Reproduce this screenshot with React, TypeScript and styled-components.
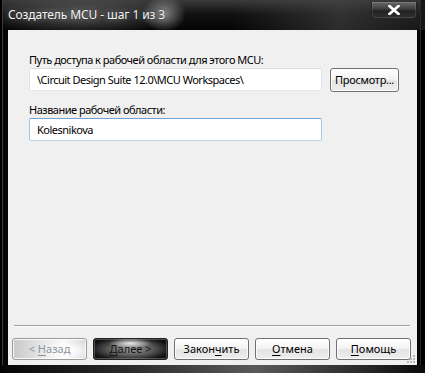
import React from "react";
import styled, { createGlobalStyle, css } from "styled-components";

const GlobalStyle = createGlobalStyle`
  html, body { margin: 0; padding: 0; background: #000; }
  body { font-family: "Noto Sans", "Open Sans", sans-serif; }
`;

const Window = styled.div`
  width: 425px;
  height: 373px;
  display: flex;
  flex-direction: column;
  background:
    radial-gradient(ellipse 95px 22px at 80px 15px, rgba(120,120,120,0.6), rgba(0,0,0,0) 100%),
    radial-gradient(ellipse 22px 18px at 164px 14px, rgba(220,220,220,0.55), rgba(0,0,0,0) 100%),
    linear-gradient(180deg, #3a3a3a 0px, #111 14px, #050505 30px),
    #000;
  box-shadow: inset 2px 0 0 #000, inset 3px 0 0 #3a3a3a, inset -4px 0 0 #000, inset -5px 0 0 #2a2a2a;
  position: relative;
  overflow: hidden;
`;

const TitleBar = styled.div`
  height: 30px;
  display: flex;
  align-items: flex-start;
  padding-left: 8px;
  background: linear-gradient(90deg, rgba(0,0,0,0) 55%, rgba(70,70,70,0.6) 80%, rgba(40,40,40,0.5) 100%);
`;

const Title = styled.div`
  margin-top: 6px;
  color: #f4f4f4;
  font-size: 12px;
  line-height: 18px;
  letter-spacing: -0.1px;
  text-shadow: 0 0 6px rgba(255,255,255,0.45), 0 0 2px rgba(0,0,0,0.8);
`;

const CloseButton = styled.div`
  margin-left: auto;
  margin-right: 8px;
  margin-top: 2px;
  width: 44px;
  height: 16px;
  border: 1px solid #222;
  border-top: none;
  border-radius: 0 0 4px 4px;
  background: linear-gradient(180deg, #6a6a6a 0%, #3c3c3c 45%, #222 55%, #2e2e2e 100%);
  box-shadow: inset 0 0 0 1px rgba(255,255,255,0.12);
  display: flex;
  align-items: center;
  justify-content: center;
`;

const Client = styled.div`
  margin: 0 8px;
  height: 335px;
  background: #f0f0f0;
  display: flex;
  flex-direction: column;
  position: relative;
  color: #000;
  font-size: 11px;
  letter-spacing: -0.5px;
`;

const Content = styled.div`
  padding: 22px 0 0 21px;
  display: flex;
  flex-direction: column;
`;

const Label = styled.div<{ $gap?: number }>`
  height: 16px;
  line-height: 16px;
  margin-top: ${(p) => p.$gap ?? 0}px;
`;

const Row = styled.div`
  display: flex;
  gap: 8px;
  align-items: flex-start;
`;

const TextBox = styled.input<{ $focused?: boolean }>`
  box-sizing: border-box;
  width: 293px;
  height: 23px;
  margin: 0;
  padding: 0 4px 0 7px;
  font: inherit;
  letter-spacing: -0.5px;
  color: #000;
  background: #fff;
  outline: none;
  border: 1px solid;
  border-radius: 2px;
  ${(p) =>
    p.$focused
      ? css`border-color: #6fa3d6 #a4c9e3 #b7d5ee #a4c9e3;`
      : css`border-color: #dcdde2 #e2e3ea #e3e9ef #e2e3ea;`}
`;

const Button = styled.div<{ $variant?: "normal" | "disabled" | "dark"; $w?: number; $h?: number; $ls?: number }>`
  box-sizing: border-box;
  width: ${(p) => p.$w ?? 75}px;
  height: ${(p) => p.$h ?? 22}px;
  border: 1px solid #707070;
  border-radius: 3px;
  display: flex;
  align-items: center;
  justify-content: center;
  line-height: 16px;
  letter-spacing: ${(p) => p.$ls ?? 0}px;
  color: #000;
  white-space: pre;
  box-shadow: inset 0 0 0 1px rgba(255,255,255,0.85);
  background: linear-gradient(180deg, #ffffff 0%, #f4f4f4 45%, #e4e4e4 55%, #eeeeee 100%);
  ${(p) =>
    p.$variant === "disabled" &&
    css`
      color: #8b95a3;
      border-color: #9a9a9a;
      background:
        radial-gradient(ellipse 30px 10px at 55px 12px, #ffffff, rgba(255,255,255,0) 100%),
        linear-gradient(90deg, #c9c9c9 0%, #e6e6e6 40%, #fafafa 70%, #d8d8d8 100%);
    `}
  ${(p) =>
    p.$variant === "dark" &&
    css`
      color: #151515;
      border-color: #222;
      box-shadow: inset 0 0 0 1px rgba(255,255,255,0.25);
      background:
        radial-gradient(ellipse 22px 5px at 50% 22%, rgba(255,255,255,0.85), rgba(255,255,255,0) 100%),
        radial-gradient(ellipse 40px 12px at 50% 50%, #9a9a9a 0%, #5a5a5a 55%, #111 100%),
        #000;
    `}
`;

const U = styled.span`
  text-decoration: underline;
  text-underline-offset: 2px;
`;

const Spacer = styled.div`
  flex: 1;
`;

const Separator = styled.div`
  margin: 0 7px 0 6px;
  height: 1px;
  background: #a0a0a0;
  border-bottom: 1px solid #fff;
`;

const ButtonRow = styled.div`
  display: flex;
  gap: 6px;
  padding: 11px 0 5px 4px;
`;

const Grip = styled.svg`
  position: absolute;
  right: 1px;
  bottom: 1px;
`;

const BottomFrame = styled.div`
  height: 8px;
  background: linear-gradient(90deg, #050505 0%, #2a2a2a 30%, #5a5a5a 60%, #2a2a2a 85%, #0a0a0a 100%);
`;

export default function App() {
  return (
    <>
      <GlobalStyle />
      <Window>
        <TitleBar>
          <Title>Создатель MCU - шаг 1 из 3</Title>
          <CloseButton>
            <svg width="12" height="10" viewBox="0 0 12 10">
              <path d="M1.5 1 L10.5 9 M10.5 1 L1.5 9" stroke="#fff" strokeWidth="2.6" strokeLinecap="square" />
            </svg>
          </CloseButton>
        </TitleBar>
        <Client>
          <Content>
            <Label>Путь доступа к рабочей области для этого MCU:</Label>
            <Row>
              <TextBox readOnly defaultValue="\Circuit Design Suite 12.0\MCU Workspaces\" />
              <Button $w={69} $h={24} $ls={-0.3}>Просмотр...</Button>
            </Row>
            <Label $gap={10}>Название рабочей области:</Label>
            <Row>
              <TextBox $focused readOnly defaultValue="Kolesnikova" />
            </Row>
          </Content>
          <Spacer />
          <Separator />
          <ButtonRow>
            <Button $variant="disabled">{"< "}<U>Н</U>азад</Button>
            <Button $variant="dark"><U>Д</U>алее {">"}</Button>
            <Button>Закон<U>ч</U>ить</Button>
            <Button><U>О</U>тмена</Button>
            <Button><U>П</U>омощь</Button>
          </ButtonRow>
          <Grip width="10" height="10" viewBox="0 0 10 10">
            {[
              [7, 1],
              [4, 4],
              [7, 4],
              [1, 7],
              [4, 7],
              [7, 7],
            ].map(([x, y], i) => (
              <rect key={i} x={x} y={y} width="2" height="2" fill="#b8b8b8" />
            ))}
          </Grip>
        </Client>
        <BottomFrame />
      </Window>
    </>
  );
}
